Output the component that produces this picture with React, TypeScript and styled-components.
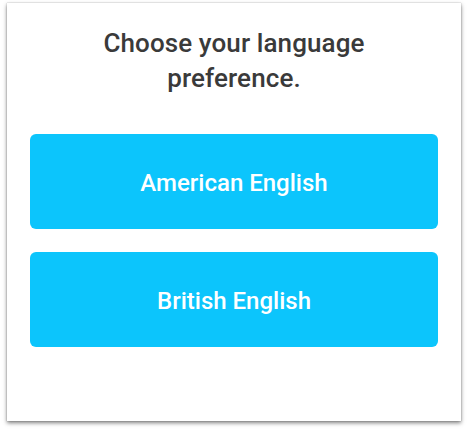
import React from "react";
import styled, { createGlobalStyle } from "styled-components";

const GlobalStyle = createGlobalStyle`
  html, body {
    margin: 0;
    padding: 0;
    background: #ffffff;
  }
  body {
    font-family: Roboto, "Liberation Sans", sans-serif;
  }
`;

const Page = styled.div`
  width: 470px;
  height: 431px;
  padding: 3px 0 0 7px;
  box-sizing: border-box;
`;

const Card = styled.div`
  width: 454px;
  height: 418px;
  box-sizing: border-box;
  background: #ffffff;
  box-shadow: 0 2px 4px rgba(0, 0, 0, 0.5), 0 0 1px rgba(0, 0, 0, 0.35);
  padding: 23px 23px 0 23px;
  display: flex;
  flex-direction: column;
`;

const Title = styled.h1`
  margin: 0 auto 38px;
  max-width: 300px;
  font-size: 26px;
  line-height: 35px;
  font-weight: 500;
  letter-spacing: 0.1px;
  color: #3a3a3a;
  text-align: center;
`;

const Options = styled.div`
  display: flex;
  flex-direction: column;
  gap: 23px;
`;

const Option = styled.button`
  height: 95px;
  border: none;
  border-radius: 6px;
  background: #0cc5fc;
  color: #ffffff;
  font-family: Roboto, "Liberation Sans", sans-serif;
  font-size: 24px;
  font-weight: 500;
  padding-top: 3px;
  cursor: pointer;
`;

const languages = ["American English", "British English"];

export default function App() {
  return (
    <Page>
      <GlobalStyle />
      <Card>
        <Title>Choose your language preference.</Title>
        <Options>
          {languages.map((lang) => (
            <Option key={lang}>{lang}</Option>
          ))}
        </Options>
      </Card>
    </Page>
  );
}
